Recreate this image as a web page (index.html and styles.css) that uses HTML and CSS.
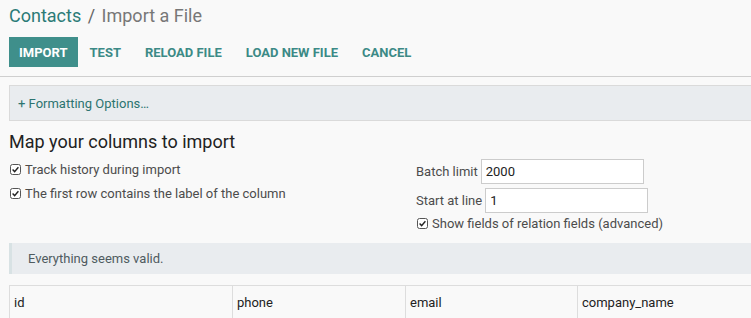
FILE: index.html
```html
<!DOCTYPE html>
<html lang="en">
<head>
  <meta charset="UTF-8">
  <title>Contacts / Import a File</title>
  <link rel="stylesheet" href="styles.css">
</head>
<body>
  <div class="control-panel">
    <div class="breadcrumb">
      <a href="#" class="crumb-link">Contacts</a>
      <span class="crumb-sep">/</span>
      <span class="crumb-active">Import a File</span>
    </div>
    <div class="buttons">
      <button class="btn btn-primary">Import</button>
      <button class="btn">Test</button>
      <button class="btn">Reload File</button>
      <button class="btn">Load New File</button>
      <button class="btn">Cancel</button>
    </div>
  </div>

  <div class="content">
    <div class="inner">
      <div class="options-panel">
        <a href="#" class="options-toggle">+ Formatting Options…</a>
      </div>

      <h2>Map your columns to import</h2>

      <div class="settings">
        <div class="settings-left">
          <label class="check-row">
            <span class="check"><svg viewBox="0 0 11 11" width="11" height="11"><rect x="0.5" y="0.5" width="10" height="10" rx="2" fill="#fff" stroke="#555"/><path d="M2.6 5.6 L4.6 7.6 L8.4 3.2" fill="none" stroke="#222" stroke-width="1.4"/></svg></span>
            Track history during import
          </label>
          <label class="check-row">
            <span class="check"><svg viewBox="0 0 11 11" width="11" height="11"><rect x="0.5" y="0.5" width="10" height="10" rx="2" fill="#fff" stroke="#555"/><path d="M2.6 5.6 L4.6 7.6 L8.4 3.2" fill="none" stroke="#222" stroke-width="1.4"/></svg></span>
            The first row contains the label of the column
          </label>
        </div>
        <div class="settings-right">
          <label class="field-row">Batch limit <input class="field" type="text" value="2000"></label>
          <label class="field-row">Start at line <input class="field" type="text" value="1"></label>
          <label class="check-row relation-row">
            <span class="check"><svg viewBox="0 0 11 11" width="11" height="11"><rect x="0.5" y="0.5" width="10" height="10" rx="2" fill="#fff" stroke="#555"/><path d="M2.6 5.6 L4.6 7.6 L8.4 3.2" fill="none" stroke="#222" stroke-width="1.4"/></svg></span>
            Show fields of relation fields (advanced)
          </label>
        </div>
      </div>

      <div class="alert">Everything seems valid.</div>

      <table class="preview">
        <colgroup>
          <col class="col-id">
          <col class="col-phone">
          <col class="col-email">
          <col>
        </colgroup>
        <tr>
          <th>id</th>
          <th>phone</th>
          <th>email</th>
          <th>company_name</th>
        </tr>
      </table>
    </div>
  </div>
</body>
</html>
```

FILE: styles.css
```css
body {
  margin: 0;
  background: #f9f9f9;
  font-family: Roboto, "Liberation Sans", sans-serif;
  font-size: 13px;
  color: #4c4c4c;
}
.control-panel {
  padding: 5px 9px 9px;
  border-bottom: 1px solid #cfcfcf;
}
.breadcrumb {
  font-size: 18px;
  line-height: 22px;
  color: #777;
}
.crumb-link {
  color: #2b7b77;
  text-decoration: none;
}
.crumb-sep {
  color: #666;
  margin: 0 2px;
}
.buttons {
  display: flex;
  margin-top: 10px;
}
.btn {
  background: none;
  border: none;
  padding: 0 12px;
  height: 30px;
  font-family: inherit;
  font-size: 13px;
  font-weight: bold;
  text-transform: uppercase;
  color: #3c8a86;
  cursor: pointer;
}
.btn-primary {
  background: #3f8f8b;
  color: #fff;
  padding: 0 10px;
}
.content {
  overflow: hidden;
  padding-left: 9px;
}
.inner {
  width: 800px;
}
.options-panel {
  margin-top: 8px;
  height: 34px;
  background: #e9ecef;
  border: 1px solid #dadada;
  display: flex;
  align-items: center;
  padding-left: 8px;
}
.options-toggle {
  color: #2d7470;
  text-decoration: none;
}
h2 {
  margin: 10px 0 0;
  font-size: 18px;
  line-height: 22px;
  font-weight: normal;
  color: #222;
}
.settings {
  display: grid;
  grid-template-columns: 407px 1fr;
  margin-top: 4px;
}
.check-row {
  display: flex;
  align-items: center;
  gap: 4px;
  height: 24px;
}
.relation-row {
  margin-top: -4px;
}
.check {
  display: inline-flex;
  margin-left: 1px;
}
.field-row {
  display: flex;
  align-items: center;
  gap: 3px;
  height: 29px;
}
.field {
  width: 163px;
  height: 25px;
  box-sizing: border-box;
  border: 1px solid #ccc;
  background: #fff;
  font-family: inherit;
  font-size: 13px;
  color: #222;
  padding: 0 4px;
}
.alert {
  margin-top: 8px;
  height: 31px;
  display: flex;
  align-items: center;
  background: #e9ecef;
  border-left: 3px solid #d8e2e4;
  padding-left: 16px;
  color: #4f5b5f;
}
.preview {
  margin-top: 11px;
  border-collapse: collapse;
  table-layout: fixed;
  width: 791px;
}
.preview th {
  text-align: left;
  font-weight: normal;
  color: #222;
  height: 32px;
  padding: 0 4px;
  border: 1px solid #ddd;
  border-bottom: none;
}
.col-id { width: 223px; }
.col-phone { width: 173px; }
.col-email { width: 172px; }
```
